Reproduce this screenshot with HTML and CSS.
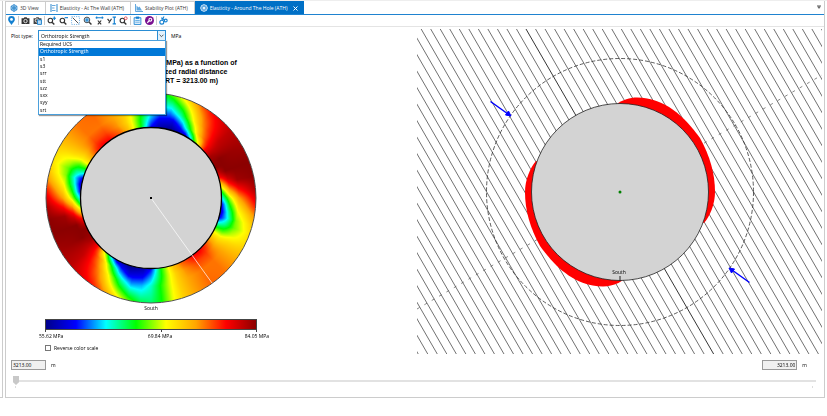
FILE: index.html
```html
<!DOCTYPE html>
<html lang="en">
<head>
    <meta charset="UTF-8">
    <meta name="viewport" content="width=device-width, initial-scale=1.0">
    <title>Elasticity - Around The Hole (ATH)</title>
    <link rel="stylesheet" href="styles.css">
</head>
<body>
    <div class="side-strip"></div>
    <div class="window">
        <nav class="tabs">
            <button class="tab" type="button">
                <svg class="tab-icon" viewBox="0 0 16 16"><path d="M8 1l6 3.500v7L8 15l-6-3.500v-7zM8 1v14M2 4.500l12 7M14 4.500l-12 7" fill="#a9d2f0" stroke="#2f87cb" stroke-width="1.500"/><circle cx="8" cy="8" r="3" fill="none" stroke="#2f87cb"/></svg>
                3D View
            </button>
            <button class="tab" type="button">
                <svg class="tab-icon" viewBox="0 0 16 16"><path d="M2 0v16M14 0v16" stroke="#2f87cb" stroke-width="2"/><path d="M4 3h7M4 8h5M4 13h7" stroke="#64a9df" stroke-width="2"/></svg>
                Elasticity - At The Wall (ATH)
            </button>
            <button class="tab" type="button">
                <svg class="tab-icon" viewBox="0 0 16 16"><path d="M1 0v15h15" fill="none" stroke="#64a9df" stroke-width="2"/><path d="M3 3l4 4 2-2 5 8H3z" fill="#64a9df"/></svg>
                Stability Plot (ATH)
            </button>
            <button class="tab active" type="button">
                <svg class="tab-icon" viewBox="0 0 16 16"><circle cx="8" cy="8" r="6.500" fill="none" stroke="#d8ebfa" stroke-width="2"/><circle cx="8" cy="8" r="3" fill="#fff"/><path d="M8 0v16M0 8h16M3 3l10 10M13 3L3 13" stroke="#d8ebfa"/></svg>
                Elasticity - Around The Hole (ATH)
                <svg class="tab-close" viewBox="0 0 10 10"><path d="M1 1l8 8M9 1L1 9" stroke="#fff" stroke-width="2"/></svg>
            </button>
            <svg class="tab-menu" viewBox="0 0 8 8"><path d="M0 1h8M1 3h6L4 7z" fill="#555" stroke="#555"/></svg>
        </nav>

        <div class="toolbar">
            <button class="tool" type="button" aria-label="Location"><svg viewBox="0 0 16 16"><path d="M8 16C5 11 2 9 2 6a6 6 0 0 1 12 0c0 3-3 5-6 10z" fill="#1480d0"/><circle cx="8" cy="6" r="2.500" fill="#fff"/></svg></button>
            <span class="sep"></span>
            <button class="tool" type="button" aria-label="Snapshot"><svg viewBox="0 0 16 16"><path d="M1 4h4l1-2h4l1 2h4v10H1z" fill="#333"/><circle cx="8" cy="9" r="3" fill="#333" stroke="#fff" stroke-width="1.500"/></svg></button>
            <button class="tool" type="button" aria-label="Copy snapshot"><svg viewBox="0 0 16 16"><path d="M1 4h4l1-2h4l1 2h4v10H1z" fill="#444"/><circle cx="7" cy="8" r="3" fill="#444" stroke="#fff" stroke-width="1.500"/><path d="M8 7h7v8H8z" fill="#b9dcf6" stroke="#1480d0" stroke-width="1.500"/></svg></button>
            <span class="sep"></span>
            <button class="tool" type="button" aria-label="Zoom in"><svg viewBox="0 0 16 16"><circle cx="6" cy="8" r="4" fill="none" stroke="#333" stroke-width="2"/><path d="M9 11l4 4" stroke="#333" stroke-width="2.500"/><path d="M13 1v6M10 4h6" stroke="#1480d0" stroke-width="2"/></svg></button>
            <button class="tool" type="button" aria-label="Zoom out"><svg viewBox="0 0 16 16"><circle cx="6" cy="8" r="4" fill="none" stroke="#333" stroke-width="2"/><path d="M9 11l4 4" stroke="#333" stroke-width="2.500"/><path d="M10 3h6" stroke="#1480d0" stroke-width="2"/></svg></button>
            <button class="tool" type="button" aria-label="Zoom to area"><svg viewBox="0 0 16 16"><path d="M1 1h14v14H1z" fill="none" stroke="#64a9df" stroke-width="1.500" stroke-dasharray="2 2"/><path d="M3 3l10 10" stroke="#333" stroke-width="1.500"/></svg></button>
            <button class="tool" type="button" aria-label="Zoom to fit"><svg viewBox="0 0 16 16"><circle cx="7" cy="7" r="5" fill="#b9dcf6" stroke="#333" stroke-width="1.500"/><path d="M11 11l4 4" stroke="#333" stroke-width="2.500"/><path d="M4 7h6M7 4v6" stroke="#1480d0" stroke-width="2"/></svg></button>
            <button class="tool" type="button" aria-label="Fit X"><svg viewBox="0 0 16 16"><path d="M1 3h14M3 1v4M13 1v4" stroke="#1480d0" stroke-width="2"/><path d="M5 8l6 7M11 8l-6 7" stroke="#333" stroke-width="2"/></svg></button>
            <button class="tool" type="button" aria-label="Fit Y"><svg viewBox="0 0 16 16"><path d="M13 1v14M10 2h6M10 14h6" stroke="#1480d0" stroke-width="2"/><path d="M1 5l3 4M8 5l-5 8" stroke="#333" stroke-width="2"/></svg></button>
            <button class="tool" type="button" aria-label="Reset zoom"><svg viewBox="0 0 16 16"><circle cx="6" cy="8" r="4" fill="none" stroke="#333" stroke-width="2"/><path d="M9 11l4 4" stroke="#333" stroke-width="2.500"/><circle cx="12" cy="4" r="2.500" fill="#fff" stroke="#e0444c" stroke-width="1.500"/></svg></button>
            <span class="sep"></span>
            <button class="tool" type="button" aria-label="Report"><svg viewBox="0 0 16 16"><path d="M2 3h12v12H2z" fill="#e6f3fd" stroke="#1480d0" stroke-width="1.500"/><path d="M5 1h6v4H5z" fill="#1480d0"/><path d="M4 8h8M4 11h8" stroke="#1480d0"/></svg></button>
            <button class="tool" type="button" aria-label="Key"><svg viewBox="0 0 16 16"><circle cx="8" cy="8" r="8" fill="#7a1291"/><circle cx="9.500" cy="6.500" r="2.500" fill="none" stroke="#fff" stroke-width="2"/><path d="M8 8l-4 4" stroke="#fff" stroke-width="2"/></svg></button>
            <span class="sep"></span>
            <button class="tool" type="button" aria-label="Settings"><svg viewBox="0 0 16 16"><circle cx="5" cy="11" r="3.500" fill="none" stroke="#1480d0" stroke-width="2"/><circle cx="12" cy="8" r="2.500" fill="none" stroke="#1480d0" stroke-width="2"/><path d="M5 7l4-6M4 3l6 4" stroke="#1480d0" stroke-width="2"/></svg></button>
        </div>

        <main class="panes">
            <section class="pane">
                <div class="plot-type">
                    <label for="plotType">Plot type:</label>
                    <div class="combo">
                        <select id="plotType" class="combo-select">
                            <option>Orthotropic Strength</option>
                        </select>
                        <svg class="combo-arrow" viewBox="0 0 9 10"><path d="M2 4l2.500 2.500L7 4" fill="none" stroke="#333"/></svg>
                        <ul class="combo-list">
                            <li>Required UCS</li>
                            <li class="selected">Orthotropic Strength</li>
                            <li>s1</li>
                            <li>s3</li>
                            <li>srr</li>
                            <li>stt</li>
                            <li>szz</li>
                            <li>sxx</li>
                            <li>syy</li>
                            <li>srt</li>
                        </ul>
                    </div>
                    <span>MPa</span>
                </div>

                <div class="ring-plot">
                    <h2 class="plot-title">
                        <span>Plots of Orthotropic Strength (MPa) as a function of</span>
                        <span>hole azimuth and a normalized radial distance</span>
                        <span>(at a measured depth of RT = 3213.00 m)</span>
                    </h2>
                    <canvas id="ring" class="ring" width="212" height="212"></canvas>
                    <div class="south">South</div>
                    <div class="scale-bar"></div>
                    <div class="scale-ticks"><i></i><i></i><i></i></div>
                    <div class="scale-labels">
                        <span>55.62 MPa</span>
                        <span>69.84 MPa</span>
                        <span>84.05 MPa</span>
                    </div>
                    <label class="reverse"><input type="checkbox"> Reverse color scale</label>
                </div>
            </section>

            <section class="pane">
                <svg class="hole-plot" viewBox="0 0 405 325">
                    <g id="bedding"></g>
                    <path d="M0 280L405 46" class="normal"/>
                    <circle cx="203" cy="163" r="133.500" class="far-circle"/>
                    <g transform="translate(203 163)">
                        <path id="breakout" class="breakout" d="M-3 -88C2 -92 10 -94.500 17 -94.500C45 -94 64 -76 80 -54C90 -36 95 -18 95 0C95 12 90 24 84 31L0 0z"/>
                        <use href="#breakout" transform="rotate(180)"/>
                    </g>
                    <circle cx="203" cy="163" r="88.500" class="hole"/>
                    <circle cx="203" cy="163" r="1.500" fill="#008000"/>
                    <path d="M203 247v5" stroke="#222"/>
                    <text x="202" y="245" class="svg-label">South</text>
                    <g id="arrow" class="arrow">
                        <path d="M73.500 72.500L91 85" stroke-width="1.500"/>
                        <path d="M94 87l-5.500-1 3-4z" fill="#00f"/>
                    </g>
                    <use href="#arrow" transform="rotate(180 203 163)"/>
                </svg>
            </section>
        </main>

        <div class="depths">
            <label><input class="depth" type="text" value="3213.00"> m</label>
            <label><input class="depth right" type="text" value="3213.00"> m</label>
        </div>
        <input class="depth-slider" type="range" min="0" max="100" value="0" aria-label="Depth">
        <div class="slider-ticks"><i></i><i></i></div>
    </div>
    <script src="plot.js"></script>
</body>
</html>
```

FILE: styles.css
```css
* {
    box-sizing: border-box;
}
body {
    display: flex;
    gap: 2px;
    margin: 0;
    padding-right: 2px;
    background: #fff;
    border-top: 1px solid #eee;
    font-family: "Open Sans", "Noto Sans", sans-serif;
    font-size: 5px;
    line-height: 8px;
    color: #000;
}
button,
input,
select {
    font: inherit;
    color: inherit;
}
.side-strip {
    flex: 0 0 3px;
    border-right: 1px solid #ccc;
    border-bottom: 1px solid #ccc;
}
.window {
    flex: 1;
    min-width: 0;
    border: 1px solid #ccc;
    border-top: none;
}

/* tabs */
.tabs {
    display: flex;
    height: 14px;
    border-bottom: 1px solid #1f83d0;
}
.tab {
    display: flex;
    align-items: center;
    gap: 2px;
    padding: 0 6px 0 4px;
    border: 1px solid #ccc;
    border-left: none;
    border-bottom: none;
    background: #fff;
    color: #333;
    white-space: nowrap;
}
.tab.active {
    padding: 0 5px;
    background: #0070c6;
    border-color: #0070c6;
    color: #fff;
}
.tab-icon {
    width: 8px;
    height: 8px;
}
.tab-close {
    width: 5px;
    height: 5px;
    margin-left: 4px;
}
.tab-menu {
    width: 4px;
    height: 4px;
    margin: 4px 3px 0 auto;
}

/* toolbar */
.toolbar {
    display: flex;
    align-items: center;
    gap: 3px;
    height: 12px;
    padding-left: 1px;
    border-bottom: 1px solid #e4e4e4;
}
.tool {
    display: block;
    width: 9px;
    height: 9px;
    padding: 0;
    border: none;
    background: none;
}
.tool svg {
    display: block;
    width: 9px;
    height: 9px;
}
.sep {
    width: 1px;
    height: 9px;
    margin: 0 -1px;
    background: #ccc;
}

/* panes */
.panes {
    display: grid;
    grid-template-columns: 1fr 1fr;
    gap: 6px;
    padding: 2px 2px 0 0;
}
.plot-type {
    display: flex;
    align-items: center;
    padding: 1px 0 0 5px;
}
.plot-type label {
    width: 27px;
}
.combo {
    position: relative;
    width: 128px;
    margin-right: 5px;
}
.combo-select {
    display: block;
    width: 100%;
    height: 11px;
    padding: 0 2px;
    border: 1px solid #2a8dd4;
    border-radius: 0;
    background: #fff;
    appearance: none;
}
.combo-arrow {
    position: absolute;
    top: 0;
    right: 0;
    width: 9px;
    height: 11px;
    border: 1px solid #2a8dd4;
    background: #e2f1fc;
}
.combo-list {
    position: absolute;
    top: 10px;
    left: 0;
    z-index: 2;
    display: grid;
    grid-auto-rows: 1fr;
    width: 128px;
    height: 75px;
    margin: 0;
    padding: 0;
    border: 1px solid #4ba0dc;
    background: #fff;
    box-shadow: 1px 1px 1px rgba(0, 0, 0, 0.4);
    list-style: none;
    line-height: 7px;
}
.combo-list li {
    padding-left: 1px;
}
.combo-list .selected {
    background: #0078d7;
    color: #fff;
}

.ring-plot {
    display: flex;
    flex-direction: column;
    width: 212px;
    margin: 17px 0 0 39px;
}
.plot-title {
    display: flex;
    flex-direction: column;
    align-items: center;
    margin: 0;
    font-family: "Liberation Sans", Arial, sans-serif;
    font-size: 7px;
    line-height: 9px;
    white-space: nowrap;
}
.ring {
    width: 212px;
    height: 212px;
    margin-top: 7px;
}
.south {
    text-align: center;
}
.scale-bar {
    height: 11px;
    margin-top: 7px;
    border: 1px solid #444;
    background: linear-gradient(to right, #00008b, #0000ff, #00ffff, #00ff00, #ffff00, #ffa500, #ff0000, #8b0000);
}
.scale-ticks {
    display: flex;
    justify-content: space-between;
}
.scale-ticks i {
    width: 1px;
    height: 2px;
    background: #444;
}
.scale-ticks i:nth-child(2) {
    margin-left: 20px;
}
.scale-labels {
    display: flex;
    justify-content: space-between;
    margin: 0 -12px 0 -6px;
}
.scale-labels span:nth-child(2) {
    margin-left: 12px;
}
.reverse {
    display: flex;
    align-items: center;
    gap: 3px;
    margin-top: 4px;
}
.reverse input {
    width: 6px;
    height: 6px;
    margin: 0;
    border: 1px solid #777;
    background: #fff;
    appearance: none;
}

.hole-plot {
    display: block;
    width: 100%;
}
.bed {
    stroke: #333;
    stroke-width: 0.7;
}
.bed.main {
    stroke: #000;
    stroke-width: 0.8;
}
.normal {
    stroke: #555;
    stroke-width: 0.7;
    stroke-dasharray: 3 5.5;
}
.far-circle {
    fill: none;
    stroke: #333;
    stroke-width: 0.8;
    stroke-dasharray: 4 2;
}
.breakout {
    fill: #f00;
}
.hole {
    fill: #d3d3d3;
    stroke: #222;
    stroke-width: 0.8;
}
.svg-label {
    font-size: 5px;
    text-anchor: middle;
}
.arrow {
    stroke: #00f;
}

/* depth range */
.depths {
    display: flex;
    justify-content: space-between;
    padding: 6px 17px 0 5px;
}
.depths label {
    display: flex;
    align-items: center;
    gap: 5px;
}
.depth {
    width: 35px;
    height: 10px;
    padding: 0 1px;
    border: 1px solid #999;
    background: #f0f0f0;
}
.depth.right {
    text-align: right;
}
.depth-slider {
    display: block;
    width: calc(100% - 15px);
    height: 9px;
    margin: 6px 8px 0 7px;
    background: linear-gradient(#e2e2e2, #e2e2e2) center / 100% 2px no-repeat;
    appearance: none;
}
.depth-slider::-webkit-slider-thumb {
    width: 6px;
    height: 9px;
    background: #c8c8c8;
    clip-path: polygon(0 0, 100% 0, 100% 70%, 50% 100%, 0 70%);
    appearance: none;
}
.slider-ticks {
    display: flex;
    justify-content: space-between;
    padding: 1px 11px 9px 9px;
}
.slider-ticks i {
    width: 1px;
    height: 2px;
    background: #ddd;
}
```

FILE: plot.js
```js
// colour scale, low to high
const colors = [
    [0, 0, 139], [0, 0, 255], [0, 255, 255], [0, 255, 0],
    [255, 255, 0], [255, 165, 0], [255, 0, 0], [139, 0, 0]
];

// strength per ring: [angle from east in degrees, value 0..7], repeats every 180
const rings = [
    { r: 71, v: [[0, 2], [5, 1], [11, 0.6], [16, 0.9], [20, 2], [24, 3], [28, 4], [35, 5], [42, 5.8], [48, 6.1], [55, 6], [65, 5.4], [72, 4.7], [76, 4], [82, 3], [86, 2], [90, 1], [96, 0.3], [106, 0], [118, 0.6], [124, 2], [127, 3], [131, 4], [134, 5], [138, 6], [145, 6.8], [155, 7], [163, 6], [167, 5], [171, 4], [175, 3], [180, 2]] },
    { r: 79, v: [[0, 3.7], [5, 3], [10, 2.4], [15, 2], [20, 2.5], [25, 3.3], [30, 4.2], [37, 5], [45, 5.6], [55, 5.6], [65, 5.1], [72, 4.5], [78, 3.7], [84, 2.7], [90, 1.6], [96, 0.9], [106, 0.7], [113, 1.5], [118, 2.6], [123, 3.7], [128, 4.8], [135, 5.8], [142, 6.5], [150, 7], [160, 7], [166, 6.4], [171, 5.6], [175, 4.8], [180, 3.7]] },
    { r: 88, v: [[0, 5], [5, 4.4], [10, 3.9], [15, 3.5], [20, 3.4], [25, 3.8], [30, 4.4], [37, 5], [45, 5.3], [55, 5.3], [65, 5], [72, 4.5], [78, 3.8], [84, 3], [90, 2.2], [96, 1.7], [103, 1.6], [110, 2.4], [115, 3.3], [120, 4.2], [125, 5], [130, 5.6], [140, 6.5], [150, 6.9], [160, 7], [168, 6.8], [175, 5.8], [180, 5]] },
    { r: 106, v: [[0, 6.4], [5, 5.9], [10, 5.2], [15, 4.7], [20, 4.4], [25, 4.4], [30, 4.6], [37, 5], [45, 5.3], [55, 5.4], [65, 5], [72, 4.5], [78, 3.9], [84, 3], [90, 2.6], [96, 2.8], [103, 3.5], [110, 4.4], [115, 5], [120, 5.6], [125, 6], [130, 6.2], [140, 6.6], [150, 6.8], [160, 7], [168, 7], [175, 6.8], [180, 6.4]] }
];

function interpolate(points, x) {
    let i = 1;
    while (i < points.length - 1 && points[i][0] < x) i++;
    const a = points[i - 1];
    const b = points[i];
    return a[1] + (b[1] - a[1]) * (x - a[0]) / (b[0] - a[0]);
}

function colorAt(value) {
    const v = Math.min(6.999, Math.max(0, value));
    const i = Math.floor(v);
    return colors[i].map((c, k) => c + (colors[i + 1][k] - c) * (v - i));
}

function drawRing() {
    const ctx = document.getElementById("ring").getContext("2d");
    const c = 106;
    const image = ctx.createImageData(212, 212);
    for (let y = 0; y < 212; y++) {
        for (let x = 0; x < 212; x++) {
            const dx = x + 0.5 - c;
            const dy = y + 0.5 - c;
            const r = Math.hypot(dx, dy);
            if (r > 105 || r < 69) continue;
            const angle = (Math.atan2(dy, dx) * 180 / Math.PI + 360) % 180;
            const value = interpolate(rings.map(ring => [ring.r, interpolate(ring.v, angle)]), r);
            image.data.set([...colorAt(value), 255], (y * 212 + x) * 4);
        }
    }
    ctx.putImageData(image, 0, 0);

    ctx.beginPath();
    ctx.arc(c, c, 105, 0, Math.PI * 2);
    ctx.strokeStyle = "#555";
    ctx.stroke();

    ctx.beginPath();
    ctx.arc(c, c, 70.5, 0, Math.PI * 2);
    ctx.fillStyle = "#d3d3d3";
    ctx.fill();
    ctx.strokeStyle = "#000";
    ctx.lineWidth = 1.3;
    ctx.stroke();

    ctx.beginPath();
    ctx.moveTo(c, c);
    ctx.lineTo(c + 61, c + 85);
    ctx.strokeStyle = "rgba(255, 255, 255, 0.7)";
    ctx.lineWidth = 1;
    ctx.stroke();

    ctx.fillStyle = "#000";
    ctx.fillRect(c - 1, c - 1, 2, 2);
}

// bedding planes dip 60 degrees, the middle one goes through the hole centre
function drawBedding() {
    const group = document.getElementById("bedding");
    const run = 325 / Math.tan(Math.PI / 3);
    for (let i = -31; i <= 31; i++) {
        const x = 109 + i * 9.53;
        const line = document.createElementNS("http://www.w3.org/2000/svg", "line");
        line.setAttribute("x1", x);
        line.setAttribute("y1", 0);
        line.setAttribute("x2", x + run);
        line.setAttribute("y2", 325);
        line.setAttribute("class", i === 0 ? "bed main" : "bed");
        group.appendChild(line);
    }
}

drawRing();
drawBedding();
```
